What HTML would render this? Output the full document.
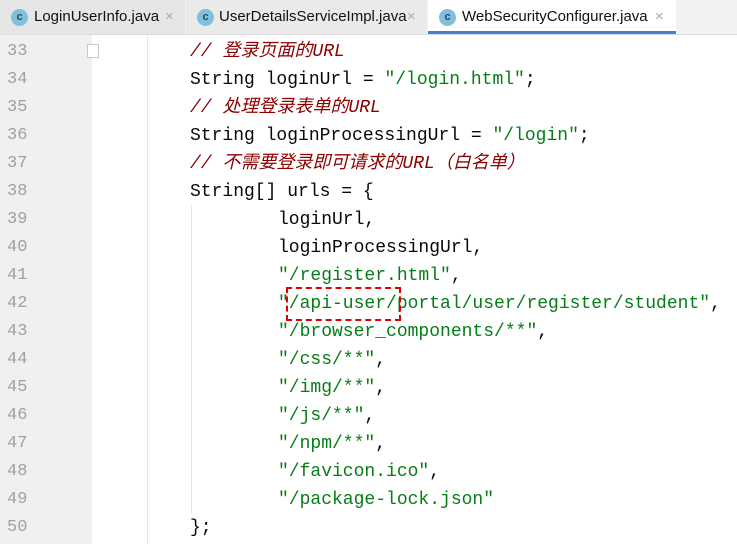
<!DOCTYPE html>
<html><head><meta charset="utf-8"><style>
html,body{margin:0;padding:0;width:737px;height:544px;overflow:hidden;background:#fff;font-family:"Liberation Sans","Noto Sans CJK SC",sans-serif}
.tabs{position:absolute;left:0;top:0;width:737px;height:34px;background:#f2f2f2;border-bottom:1px solid #dcdcdc}
.tab{position:absolute;top:0;height:34px;background:#e6e6e6;font-size:15px;color:#111;line-height:34px}
.tab .ic{position:absolute;left:11px;top:9px;width:17px;height:17px;border-radius:50%;background:#7fc1dc;color:#2b4a5a;font-size:11px;line-height:16px;text-align:center;font-weight:bold}
.tab .x{position:absolute;color:#aaa;font-size:15px}
.tab.act{background:#fff}
.tab.act:after{content:"";position:absolute;left:0;right:0;bottom:0;height:3px;background:#4083c9}
.gut{position:absolute;left:0;top:35px;width:92px;height:509px;background:#f0f0f0}
.gline{position:absolute;left:147px;top:35px;width:1px;height:509px;background:#e8e8e8}
.guide{position:absolute;left:191px;top:205px;width:1px;height:308px;background:#e4e4e4}
.ln{position:absolute;left:7px;font-family:"Liberation Mono",monospace;font-size:17px;color:#a0a0a0;line-height:28px}
.code{position:absolute;font-family:"Liberation Mono","Noto Sans CJK SC",monospace;font-size:18px;color:#080808;white-space:pre;line-height:28px;height:28px}
.c{color:#8c0000;font-style:italic}
.s{color:#067d17}
.box{position:absolute;left:286px;top:287px;width:111px;height:30px;border:2px dashed #e00000}
.fold{position:absolute;left:87px;top:44px;width:10px;height:12px;border:1px solid #c8c8c8;background:#fff}
</style></head><body>
<div class="tabs">
<div class="tab" style="left:0;width:185px"><span class="ic">c</span><span style="position:absolute;left:34px">LoginUserInfo.java</span><span class="x" style="left:165px">×</span></div>
<div class="tab" style="left:186px;width:241px;background:#eaeaea"><span class="ic">c</span><span style="position:absolute;left:33px">UserDetailsServiceImpl.java</span><span class="x" style="left:221px">×</span></div>
<div class="tab act" style="left:428px;width:248px"><span class="ic">c</span><span style="position:absolute;left:34px">WebSecurityConfigurer.java</span><span class="x" style="left:227px">×</span></div>
</div>
<div class="gut"></div><div class="gline"></div><div class="guide"></div><div class="fold"></div>
<div class="ln" style="top:38px">33</div><div class="ln" style="top:66px">34</div><div class="ln" style="top:94px">35</div><div class="ln" style="top:122px">36</div><div class="ln" style="top:150px">37</div><div class="ln" style="top:178px">38</div><div class="ln" style="top:206px">39</div><div class="ln" style="top:234px">40</div><div class="ln" style="top:262px">41</div><div class="ln" style="top:290px">42</div><div class="ln" style="top:318px">43</div><div class="ln" style="top:346px">44</div><div class="ln" style="top:374px">45</div><div class="ln" style="top:402px">46</div><div class="ln" style="top:430px">47</div><div class="ln" style="top:458px">48</div><div class="ln" style="top:486px">49</div><div class="ln" style="top:514px">50</div>
<div class="code" style="left:190px;top:38px"><span class="c">// 登录页面的URL</span></div>
<div class="code" style="left:190px;top:66px">String loginUrl = <span class="s">"/login.html"</span>;</div>
<div class="code" style="left:190px;top:94px"><span class="c">// 处理登录表单的URL</span></div>
<div class="code" style="left:190px;top:122px">String loginProcessingUrl = <span class="s">"/login"</span>;</div>
<div class="code" style="left:190px;top:150px"><span class="c">// 不需要登录即可请求的URL（白名单）</span></div>
<div class="code" style="left:190px;top:178px">String[] urls = {</div>
<div class="code" style="left:278px;top:206px">loginUrl,</div>
<div class="code" style="left:278px;top:234px">loginProcessingUrl,</div>
<div class="code" style="left:278px;top:262px"><span class="s">"/register.html"</span>,</div>
<div class="code" style="left:278px;top:290px"><span class="s">"/api-user/portal/user/register/student"</span>,</div>
<div class="code" style="left:278px;top:318px"><span class="s">"/browser_components/**"</span>,</div>
<div class="code" style="left:278px;top:346px"><span class="s">"/css/**"</span>,</div>
<div class="code" style="left:278px;top:374px"><span class="s">"/img/**"</span>,</div>
<div class="code" style="left:278px;top:402px"><span class="s">"/js/**"</span>,</div>
<div class="code" style="left:278px;top:430px"><span class="s">"/npm/**"</span>,</div>
<div class="code" style="left:278px;top:458px"><span class="s">"/favicon.ico"</span>,</div>
<div class="code" style="left:278px;top:486px"><span class="s">"/package-lock.json"</span></div>
<div class="code" style="left:190px;top:514px">};</div>
<div class="box"></div>
</body></html>
